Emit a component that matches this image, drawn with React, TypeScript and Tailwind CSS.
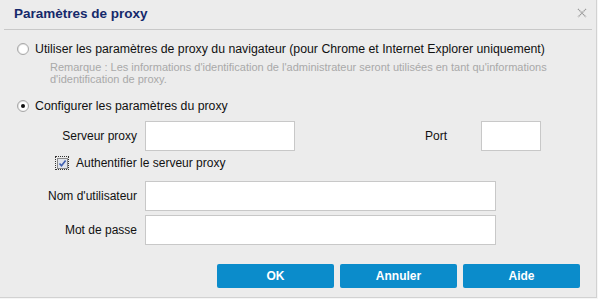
import React from "react";

function Radio({ checked }: { checked?: boolean }) {
  return (
    <span className="relative inline-flex h-[12px] w-[12px] items-center justify-center rounded-full border border-[#a8a8a8] bg-gradient-to-br from-[#dcdcdc] to-[#ffffff]">
      <span className="h-[8px] w-[8px] rounded-full bg-white flex items-center justify-center">
        {checked && <span className="h-[4px] w-[4px] rounded-full bg-[#111]" />}
      </span>
    </span>
  );
}

function Checkbox() {
  return (
    <span className="inline-flex h-[14px] w-[14px] items-center justify-center border border-dotted border-[#333]">
      <span className="flex h-[11px] w-[11px] items-center justify-center border border-[#8a8a8a] bg-[#dfe3ec]">
        <svg width="9" height="9" viewBox="0 0 9 9">
          <path d="M1.5 4.5 L3.5 6.8 L7.6 1.5" fill="none" stroke="#3f5fb0" strokeWidth="1.6" />
        </svg>
      </span>
    </span>
  );
}

function Field({ w }: { w: string }) {
  return <div className={`h-full bg-white border border-[#c8c8c8] ${w}`} />;
}

export default function App() {
  const font = { fontFamily: '"Liberation Sans", Arial, sans-serif' };
  return (
    <div className="w-[598px] h-[299px] bg-[#f6f6f6]" style={font}>
      <div className="w-[597px] h-[298px] bg-[#ececec] border-r border-b border-[#d2d2d2] flex flex-col text-[12px] text-[#111]">
        {/* title */}
        <div className="h-[29px] flex items-center justify-between pl-[14px] pr-[9px]">
          <span className="text-[13.5px] font-bold text-[#15296b] leading-none mt-[-2px]">Paramètres de proxy</span>
          <svg width="10" height="10" viewBox="0 0 10 10" className="mt-[-4px]">
            <path d="M1 1 L9 9 M9 1 L1 9" stroke="#9a9a9a" strokeWidth="1.3" strokeDasharray="1.2 0.6" />
          </svg>
        </div>
        <div className="mx-[4px] h-px bg-[#c8c8c8]" />

        {/* option 1 */}
        <div className="mt-[12px] pl-[17px] flex items-center gap-[6px] h-[14px]">
          <Radio />
          <span className="text-[12.3px]">Utiliser les paramètres de proxy du navigateur (pour Chrome et Internet Explorer uniquement)</span>
        </div>
        <div className="mt-[5px] pl-[50px] pr-[18px] text-[11px] leading-[12px] text-[#a9a9a9]">
          Remarque : Les informations d'identification de l'administrateur seront utilisées en tant qu'informations d'identification de proxy.
        </div>

        {/* option 2 */}
        <div className="mt-[14px] pl-[17px] flex items-center gap-[6px] h-[14px]">
          <Radio checked />
          <span className="text-[12.3px]">Configurer les paramètres du proxy</span>
        </div>

        {/* server row */}
        <div className="mt-[8px] flex items-center h-[30px]">
          <span className="w-[138px] text-right pr-[1px]">Serveur proxy</span>
          <div className="ml-[7px] h-full flex items-center">
            <Field w="w-[150px]" />
          </div>
          <span className="ml-[130px] w-[40px]">Port</span>
          <div className="ml-[16px] h-full">
            <Field w="w-[60px]" />
          </div>
        </div>

        {/* checkbox */}
        <div className="mt-[4px] pl-[55px] flex items-center gap-[7px] h-[16px]">
          <Checkbox />
          <span>Authentifier le serveur proxy</span>
        </div>

        {/* user */}
        <div className="mt-[10px] flex items-center h-[30px]">
          <span className="w-[138px] text-right pr-[1px]">Nom d'utilisateur</span>
          <div className="ml-[7px] h-full">
            <Field w="w-[351px]" />
          </div>
        </div>
        <div className="mt-[4px] flex items-center h-[30px]">
          <span className="w-[138px] text-right pr-[1px]">Mot de passe</span>
          <div className="ml-[7px] h-full">
            <Field w="w-[351px]" />
          </div>
        </div>

        {/* buttons */}
        <div className="mt-[19px] flex justify-end gap-[6px] pr-[16px]">
          {["OK", "Annuler", "Aide"].map((t) => (
            <button
              key={t}
              className="w-[117px] h-[24px] rounded-[2px] bg-[#0b8ccb] text-white font-bold text-[12px] leading-none"
            >
              {t}
            </button>
          ))}
        </div>
      </div>
    </div>
  );
}
